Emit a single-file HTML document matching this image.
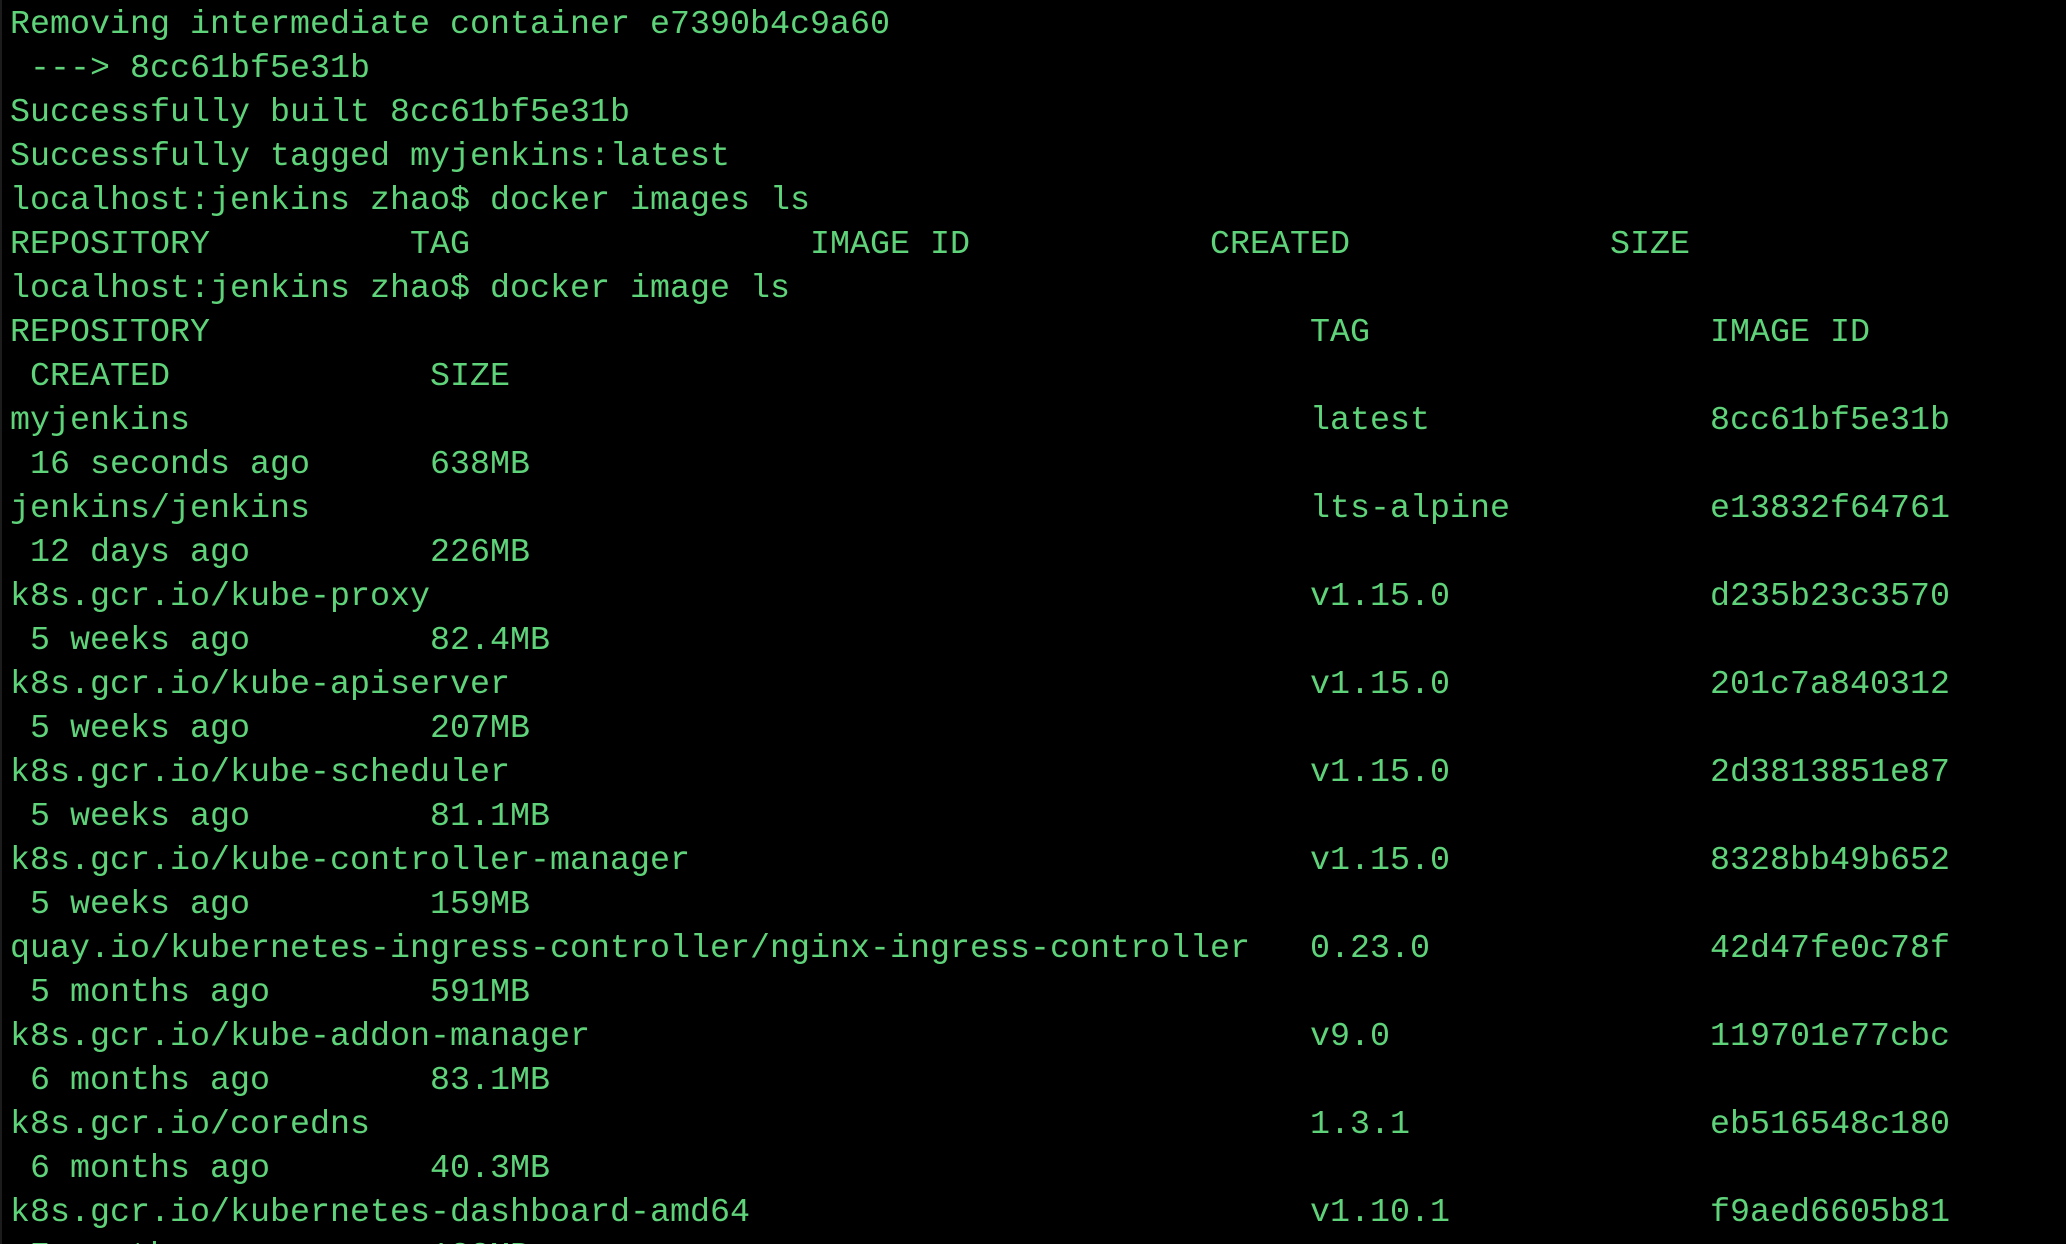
<!DOCTYPE html>
<html><head><meta charset="utf-8"><style>
html{width:2066px;height:1244px;overflow:hidden;}
html,body{margin:0;padding:0;background:#000;}
body{width:2066px;height:1244px;overflow:hidden;position:relative;border-left:2px solid #1c1c1c;box-sizing:border-box;}
pre{margin:0;position:absolute;left:8px;top:3px;font-family:"Liberation Mono",monospace;font-size:33.33px;line-height:44px;color:#5fd37a;white-space:pre;}
</style></head><body><pre>Removing intermediate container e7390b4c9a60
 ---> 8cc61bf5e31b
Successfully built 8cc61bf5e31b
Successfully tagged myjenkins:latest
localhost:jenkins zhao$ docker images ls
REPOSITORY          TAG                 IMAGE ID            CREATED             SIZE
localhost:jenkins zhao$ docker image ls
REPOSITORY                                                       TAG                 IMAGE ID
 CREATED             SIZE
myjenkins                                                        latest              8cc61bf5e31b
 16 seconds ago      638MB
jenkins/jenkins                                                  lts-alpine          e13832f64761
 12 days ago         226MB
k8s.gcr.io/kube-proxy                                            v1.15.0             d235b23c3570
 5 weeks ago         82.4MB
k8s.gcr.io/kube-apiserver                                        v1.15.0             201c7a840312
 5 weeks ago         207MB
k8s.gcr.io/kube-scheduler                                        v1.15.0             2d3813851e87
 5 weeks ago         81.1MB
k8s.gcr.io/kube-controller-manager                               v1.15.0             8328bb49b652
 5 weeks ago         159MB
quay.io/kubernetes-ingress-controller/nginx-ingress-controller   0.23.0              42d47fe0c78f
 5 months ago        591MB
k8s.gcr.io/kube-addon-manager                                    v9.0                119701e77cbc
 6 months ago        83.1MB
k8s.gcr.io/coredns                                               1.3.1               eb516548c180
 6 months ago        40.3MB
k8s.gcr.io/kubernetes-dashboard-amd64                            v1.10.1             f9aed6605b81
 7 months ago        122MB</pre></body></html>
